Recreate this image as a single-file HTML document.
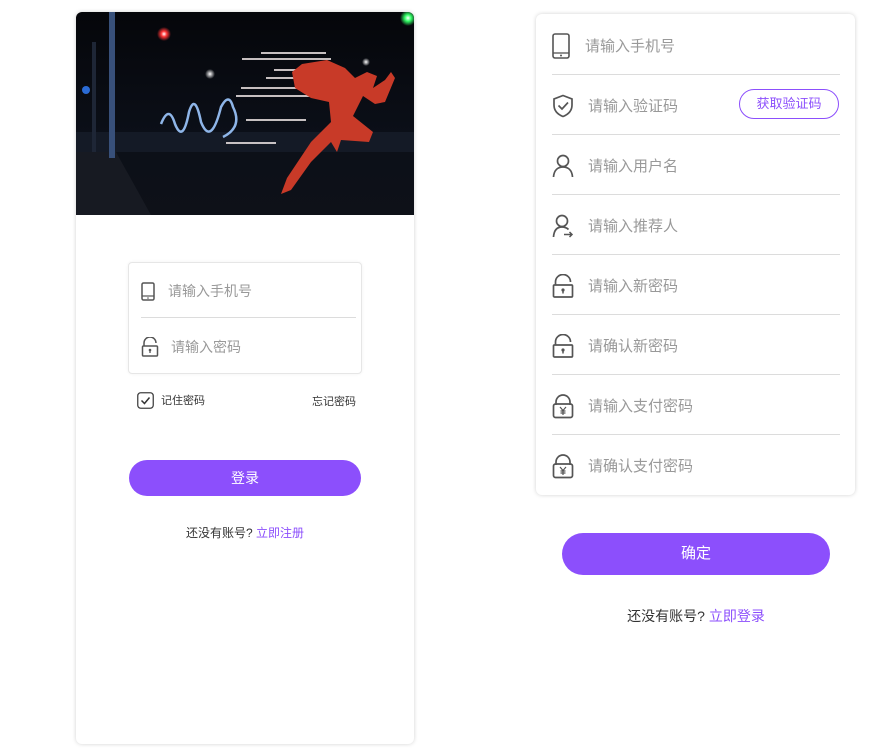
<!DOCTYPE html>
<html><head><meta charset="utf-8"><style>
*{margin:0;padding:0;box-sizing:border-box}
body{width:880px;height:754px;background:#fff;position:relative;font-family:"Liberation Sans","Noto Sans CJK SC",sans-serif;overflow:hidden}
.abs{position:absolute}
.card{position:absolute;background:#fff;border-radius:6px;box-shadow:0 0 4px rgba(0,0,0,.18)}
.ph{color:#999;font-size:15px;position:absolute}
.line{position:absolute;height:1px;background:#dcdcdc}
.ic{position:absolute}
</style></head><body>
<div class="card" style="left:76px;top:12px;width:338px;height:732px;overflow:hidden">
<svg width="338" height="203" style="display:block">
<defs><radialGradient id="g1" cx="0.5" cy="0.5" r="0.5"><stop offset="0" stop-color="#fff"/><stop offset="0.4" stop-color="#f33"/><stop offset="1" stop-color="#f330" /></radialGradient>
<radialGradient id="g2" cx="0.5" cy="0.5" r="0.5"><stop offset="0" stop-color="#fff"/><stop offset="0.4" stop-color="#3f6"/><stop offset="1" stop-color="#3f60"/></radialGradient>
<radialGradient id="g3" cx="0.5" cy="0.5" r="0.5"><stop offset="0" stop-color="#fff"/><stop offset="1" stop-color="#fff0"/></radialGradient>
<linearGradient id="bg" x1="0" y1="0" x2="0" y2="1"><stop offset="0" stop-color="#05060a"/><stop offset="0.6" stop-color="#0b0f18"/><stop offset="1" stop-color="#0e1118"/></linearGradient></defs>
<rect width="338" height="203" fill="url(#bg)"/>
<rect x="0" y="120" width="338" height="20" fill="#141a26"/>
<polygon points="0,140 40,140 75,203 0,203" fill="#171a22"/>
<rect x="33" y="0" width="6" height="146" fill="#38507a"/>
<rect x="16" y="30" width="4" height="110" fill="#1e2636"/>
<circle cx="88" cy="22" r="7" fill="url(#g1)"/>
<circle cx="332" cy="6" r="8" fill="url(#g2)"/>
<circle cx="134" cy="62" r="5" fill="url(#g3)"/>
<circle cx="290" cy="50" r="4" fill="url(#g3)"/>
<circle cx="10" cy="78" r="4" fill="#2a6bd6"/>
<path d="M85,112 q8,-20 14,0 q8,20 14,-12 q6,-20 12,10 q10,25 20,-15 q8,-15 12,0 q10,20 -10,30" stroke="#9cc8ff" stroke-width="2.5" fill="none" opacity=".9"/>
<g stroke="#e8e0e0" stroke-width="2" opacity=".85">
<line x1="185" y1="41" x2="250" y2="41"/><line x1="166" y1="47" x2="255" y2="47"/><line x1="198" y1="58" x2="265" y2="58"/><line x1="190" y1="66" x2="262" y2="66"/><line x1="165" y1="76" x2="250" y2="76"/><line x1="160" y1="84" x2="240" y2="84"/><line x1="170" y1="108" x2="230" y2="108"/><line x1="150" y1="131" x2="200" y2="131"/>
</g>
<path d="M216,60 l10,-8 l25,-4 l18,8 l10,10 l12,-6 l10,4 l-4,12 l12,-8 l6,-8 l4,6 l-10,24 l-10,2 l-12,-8 l-10,20 l20,16 l-4,10 l-28,-2 l-4,12 l-6,-10 l-20,20 l-20,28 l-10,4 l6,-16 l24,-36 l20,-20 l-2,-20 l-18,-4 l-16,-10 z" fill="#c83a28"/>
</svg>
<div class="abs" style="left:52px;top:250px;width:234px;height:112px;border:1px solid #e6e6e6;border-radius:4px;box-shadow:0 0 3px rgba(0,0,0,.06)"></div>
<svg class="ic" style="left:65px;top:270px" width="14" height="19" viewBox="0 0 14 19"><rect x="1" y="1" width="12" height="17" rx="1.5" fill="none" stroke="#555" stroke-width="1.5"/><line x1="1" y1="14" x2="13" y2="14" stroke="#555" stroke-width="1.2"/><circle cx="7" cy="16" r=".8" fill="#555"/></svg>
<div class="ph" style="left:92px;top:269px;font-size:14px">请输入手机号</div>
<div class="line" style="left:65px;top:305px;width:215px"></div>
<svg class="ic" style="left:65px;top:325px" width="18" height="20" viewBox="0 0 18 20"><path d="M3,9 V6 a6,6 0 0 1 12,0" fill="none" stroke="#555" stroke-width="1.5"/><rect x="1.5" y="9" width="15" height="10" rx="1" fill="none" stroke="#555" stroke-width="1.5"/><circle cx="9" cy="13" r="1.3" fill="#555"/><line x1="9" y1="13" x2="9" y2="16" stroke="#555" stroke-width="1.3"/></svg>
<div class="ph" style="left:95px;top:325px;font-size:14px">请输入密码</div>
<svg class="ic" style="left:61px;top:380px" width="17" height="17" viewBox="0 0 17 17"><rect x=".75" y=".75" width="15.5" height="15.5" rx="3" fill="none" stroke="#444" stroke-width="1.3"/><path d="M4.5,8.5 l3,3 l5,-6" fill="none" stroke="#333" stroke-width="1.5"/></svg>
<div class="abs" style="left:85px;top:380px;font-size:11px;color:#333">记住密码</div>
<div class="abs" style="left:236px;top:381px;font-size:11px;color:#333">忘记密码</div>
<div class="abs" style="left:53px;top:448px;width:232px;height:36px;border-radius:18px;background:#8c4ffc;color:#fff;font-size:14px;text-align:center;line-height:36px">登录</div>
<div class="abs" style="left:0;width:338px;top:512px;text-align:center;font-size:12px;color:#333">还没有账号? <span style="color:#8c4ffc">立即注册</span></div>
</div>

<div class="card" style="left:536px;top:14px;width:319px;height:481px">
<div class="line" style="left:16px;top:60px;width:288px"></div>
<div class="line" style="left:16px;top:120px;width:288px"></div>
<div class="line" style="left:16px;top:180px;width:288px"></div>
<div class="line" style="left:16px;top:240px;width:288px"></div>
<div class="line" style="left:16px;top:300px;width:288px"></div>
<div class="line" style="left:16px;top:360px;width:288px"></div>
<div class="line" style="left:16px;top:420px;width:288px"></div>
<svg class="ic" style="left:16px;top:19px" width="18" height="27" viewBox="0 0 18 27"><rect x="1" y="1" width="16" height="24" rx="2" fill="none" stroke="#555" stroke-width="1.6"/><line x1="1" y1="20" x2="17" y2="20" stroke="#555" stroke-width="1.3"/><circle cx="9" cy="22.5" r="1" fill="#555"/></svg>
<div class="ph" style="left:49px;top:21px">请输入手机号</div>
<svg class="ic" style="left:16px;top:80px" width="22" height="24" viewBox="0 0 22 24"><path d="M11,1.5 L20,5 V11 C20,17 16,20.5 11,22.5 C6,20.5 2,17 2,11 V5 Z" fill="none" stroke="#555" stroke-width="1.7"/><path d="M6.5,11.5 l3.5,3.5 l6,-6.5" fill="none" stroke="#555" stroke-width="1.7"/></svg>
<div class="ph" style="left:52px;top:81px">请输入验证码</div>
<div class="abs" style="left:203px;top:75px;width:100px;height:30px;border:1px solid #8c4ffc;border-radius:15px;color:#8c4ffc;font-size:13px;text-align:center;line-height:28px">获取验证码</div>
<svg class="ic" style="left:16px;top:140px" width="22" height="24" viewBox="0 0 22 24"><circle cx="11" cy="7" r="5.5" fill="none" stroke="#555" stroke-width="1.7"/><path d="M1.5,23 C2,16 6,13 11,13 C16,13 20,16 20.5,23" fill="none" stroke="#555" stroke-width="1.7"/></svg>
<div class="ph" style="left:52px;top:141px">请输入用户名</div>
<svg class="ic" style="left:16px;top:200px" width="22" height="24" viewBox="0 0 22 24"><circle cx="10" cy="7" r="5.5" fill="none" stroke="#555" stroke-width="1.7"/><path d="M1.5,23 C2,16 5,13 10,13 C13,13 15,14 16.5,15.5" fill="none" stroke="#555" stroke-width="1.7"/><path d="M12,20.5 H20 M17.5,18 L20,20.5 L17.5,23" fill="none" stroke="#555" stroke-width="1.5"/></svg>
<div class="ph" style="left:52px;top:201px">请输入推荐人</div>
<svg class="ic" style="left:16px;top:260px" width="22" height="24" viewBox="0 0 22 24"><path d="M3.5,11 V8 a7.5,7.5 0 0 1 15,0" fill="none" stroke="#555" stroke-width="1.7"/><rect x="1.5" y="11" width="19" height="12" rx="1" fill="none" stroke="#555" stroke-width="1.7"/><circle cx="11" cy="16" r="1.6" fill="#555"/><line x1="11" y1="16" x2="11" y2="19.5" stroke="#555" stroke-width="1.5"/></svg>
<div class="ph" style="left:52px;top:261px">请输入新密码</div>
<svg class="ic" style="left:16px;top:320px" width="22" height="24" viewBox="0 0 22 24"><path d="M3.5,11 V8 a7.5,7.5 0 0 1 15,0" fill="none" stroke="#555" stroke-width="1.7"/><rect x="1.5" y="11" width="19" height="12" rx="1" fill="none" stroke="#555" stroke-width="1.7"/><circle cx="11" cy="16" r="1.6" fill="#555"/><line x1="11" y1="16" x2="11" y2="19.5" stroke="#555" stroke-width="1.5"/></svg>
<div class="ph" style="left:52px;top:321px">请确认新密码</div>
<svg class="ic" style="left:16px;top:379px" width="22" height="26" viewBox="0 0 22 26"><path d="M4,12 V9 a7,7 0 0 1 14,0 V12" fill="none" stroke="#555" stroke-width="1.7"/><rect x="1.5" y="11" width="19" height="13.5" rx="2" fill="none" stroke="#555" stroke-width="1.7"/><path d="M8,14 l3,3.5 l3,-3.5 M11,17.5 V22 M8.5,18 H13.5 M8.5,20 H13.5" fill="none" stroke="#555" stroke-width="1.2"/></svg>
<div class="ph" style="left:52px;top:381px">请输入支付密码</div>
<svg class="ic" style="left:16px;top:439px" width="22" height="26" viewBox="0 0 22 26"><path d="M4,12 V9 a7,7 0 0 1 14,0 V12" fill="none" stroke="#555" stroke-width="1.7"/><rect x="1.5" y="11" width="19" height="13.5" rx="2" fill="none" stroke="#555" stroke-width="1.7"/><path d="M8,14 l3,3.5 l3,-3.5 M11,17.5 V22 M8.5,18 H13.5 M8.5,20 H13.5" fill="none" stroke="#555" stroke-width="1.2"/></svg>
<div class="ph" style="left:52px;top:441px">请确认支付密码</div>
</div>
<div class="abs" style="left:562px;top:533px;width:268px;height:42px;border-radius:21px;background:#8c4ffc;color:#fff;font-size:15px;text-align:center;line-height:42px">确定</div>
<div class="abs" style="left:562px;width:268px;top:606px;text-align:center;font-size:14px;color:#333">还没有账号? <span style="color:#8c4ffc">立即登录</span></div>
</body></html>
